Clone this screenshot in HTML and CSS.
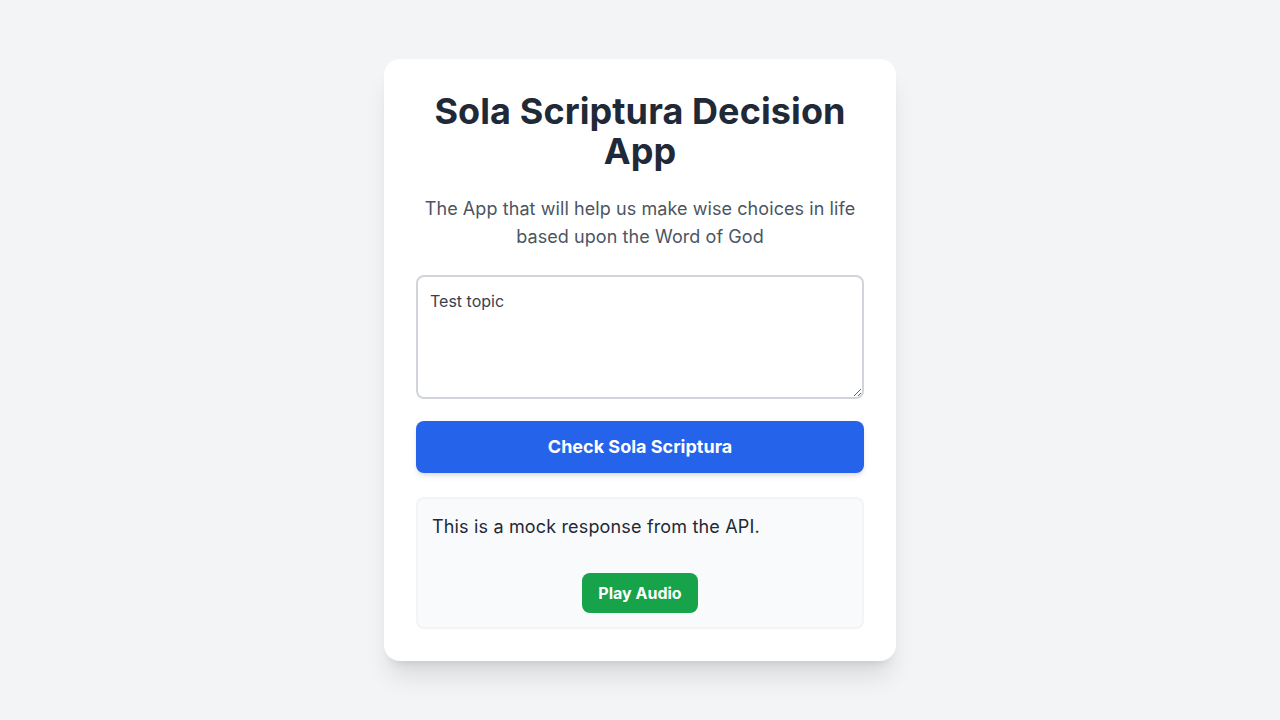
FILE: index.html
```html
<!DOCTYPE html>
<html lang="en">
<head>
<meta charset="utf-8">
<title>Sola Scriptura Decision App</title>
<link rel="stylesheet" href="styles.css">
</head>
<body>
<main class="page">
  <section class="card">
    <h1 class="title">Sola Scriptura Decision App</h1>
    <p class="subtitle">The App that will help us make wise choices in life based upon the Word of God</p>
    <textarea class="topic" rows="4">Test topic</textarea>
    <button class="check">Check Sola Scriptura</button>
    <div class="response">
      <p class="response-text">This is a mock response from the API.</p>
      <div class="audio-row"><button class="play">Play Audio</button></div>
    </div>
  </section>
</main>
</body>
</html>
```
FILE: styles.css
```css
* { box-sizing: border-box; }
html, body { margin: 0; height: 100%; }
body {
  background: #f3f4f6;
  font-family: Inter, "Noto Sans", sans-serif;
  color: #1f2937;
}
.page {
  min-height: 100vh;
  display: flex;
  align-items: center;
  justify-content: center;
}
.card {
  width: 512px;
  background: #ffffff;
  border-radius: 16px;
  padding: 32px;
  box-shadow: 0 20px 25px -5px rgba(0,0,0,0.1), 0 8px 10px -6px rgba(0,0,0,0.1);
  display: flex;
  flex-direction: column;
}
.title {
  margin: 0 0 24px;
  font-size: 36px;
  line-height: 40px;
  font-weight: 700;
  text-align: center;
  color: #1f2937;
  letter-spacing: 0.1px;
}
.subtitle {
  margin: 0 0 24px;
  font-size: 18px;
  line-height: 28px;
  text-align: center;
  color: #4b5563;
  letter-spacing: 0.08px;
}
.topic {
  display: block;
  width: 100%;
  height: 124px;
  padding: 12px;
  border: 2px solid #d1d5db;
  border-radius: 8px;
  font-family: Inter, "Noto Sans", sans-serif;
  font-size: 16px;
  line-height: 24px;
  color: #374151;
  margin: 0 0 22px;
  resize: vertical;
  outline: none;
}
.check {
  width: 100%;
  height: 52px;
  border: none;
  border-radius: 8px;
  background: #2563eb;
  color: #ffffff;
  font-family: Inter, "Noto Sans", sans-serif;
  font-size: 18px;
  line-height: 28px;
  font-weight: 700;
  box-shadow: 0 4px 6px -1px rgba(0,0,0,0.1), 0 2px 4px -2px rgba(0,0,0,0.1);
  margin: 0 0 24px;
}
.response {
  background: #f9fafb;
  border: 2px solid #f3f4f6;
  border-radius: 8px;
  padding: 14px;
}
.response-text {
  margin: 0 0 32px;
  font-size: 18px;
  line-height: 28px;
  color: #1f2937;
  letter-spacing: 0.16px;
}
.audio-row {
  display: flex;
  justify-content: center;
}
.play {
  height: 40px;
  padding: 8px 16px;
  border: none;
  border-radius: 8px;
  background: #16a34a;
  color: #ffffff;
  font-family: Inter, "Noto Sans", sans-serif;
  font-size: 16px;
  line-height: 24px;
  font-weight: 700;
}
```
